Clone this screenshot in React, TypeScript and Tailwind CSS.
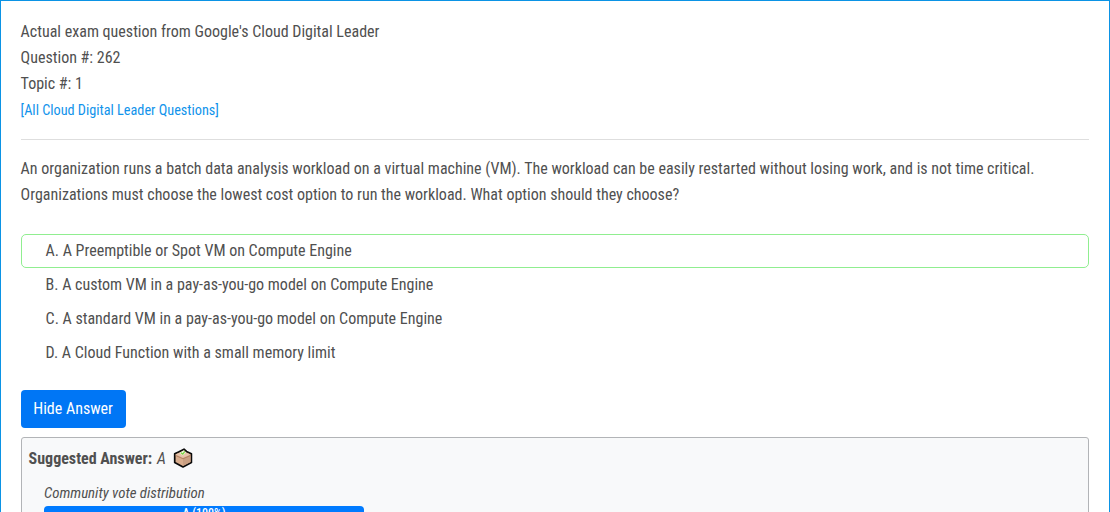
const choices = [
  { letter: "A.", text: "A Preemptible or Spot VM on Compute Engine", correct: true },
  { letter: "B.", text: "A custom VM in a pay-as-you-go model on Compute Engine", correct: false },
  { letter: "C.", text: "A standard VM in a pay-as-you-go model on Compute Engine", correct: false },
  { letter: "D.", text: "A Cloud Function with a small memory limit", correct: false },
];

function BallotBox() {
  return (
    <svg className="mb-0.5 ml-[7px] h-5 w-5" viewBox="0 0 20 20" aria-hidden="true">
      <path d="M11 1.2 L13.5 3.5 L18.4 5.8 V14.6 L10 19 L1.7 14.6 V5.8 L5.5 4 Z" fill="#d9ad8d" stroke="#0a0a0a" strokeWidth="1.7" strokeLinejoin="round" />
      <path d="M17.6 7.2 L10 10.6 V18 L17.6 14 Z" fill="#c99f82" />
      <path d="M2.5 6.4 L10 3.6 L17.6 6.4 L10 9.8 Z" fill="#e6c3aa" />
      <path d="M2.5 7.4 L10 10.8 L17.6 7.4" fill="none" stroke="#a87555" strokeWidth="0.8" />
      <path d="M6.5 5 L11 2.2 L13 4.6 L9.8 7.4 Z" fill="#eaf6da" />
      <path d="M8 4.8 L9.8 6.2 L11.8 3.4" fill="none" stroke="#78d03c" strokeWidth="1.2" />
    </svg>
  );
}

export default function App() {
  return (
    <main className="h-[512px] overflow-hidden border border-b-0 border-[#0b93e5] bg-white pr-5 pl-[19.6px] pt-[18px] font-['Roboto'] text-base leading-[26px] text-[#505050] [font-stretch:condensed]">
      <header className="h-[121px] border-b border-[#dedede]">
        <p>Actual exam question from Google's Cloud Digital Leader</p>
        <p>Question #: 262</p>
        <p>Topic #: 1</p>
        <a href="#all" className="block text-[14.24px] leading-[27px] text-[#1193eb]">[All Cloud Digital Leader Questions]</a>
      </header>
      <p className="pt-4">
        An organization runs a batch data analysis workload on a virtual machine (VM). The workload can be easily restarted without losing work, and is not time critical.
        <br />
        Organizations must choose the lowest cost option to run the workload. What option should they choose?
      </p>
      <ul className="mt-[26px]">
        {choices.map((c) => (
          <li
            key={c.letter}
            className={`flex h-[34px] items-center gap-[3.6px] rounded-[5px] border pl-6 leading-8 ${c.correct ? "border-[#90ee90]" : "border-transparent"}`}
          >
            <span>{c.letter}</span>
            <span>{c.text}</span>
          </li>
        ))}
      </ul>
      <button className="mt-5 block h-[38px] w-[105px] rounded bg-[#0076f5] text-center text-white">Hide Answer</button>
      <section className="mt-[9px] h-[200px] rounded-[3px] border border-[#b2b4b7] bg-[#f8f9fa] pl-[7px] pt-2">
        <div className="flex h-[26px] items-center">
          <strong className="font-bold">Suggested Answer:</strong>
          <em className="ml-[5px]">A</em>
          <BallotBox />
        </div>
        <div className="w-[335.4px] pl-[15.4px] pt-2">
          <p className="text-[14.88px] leading-[26px] italic">Community vote distribution</p>
          <div className="h-4 rounded bg-[#007bff] text-center text-xs leading-[14px] font-medium text-white">A (100%)</div>
        </div>
      </section>
    </main>
  );
}
